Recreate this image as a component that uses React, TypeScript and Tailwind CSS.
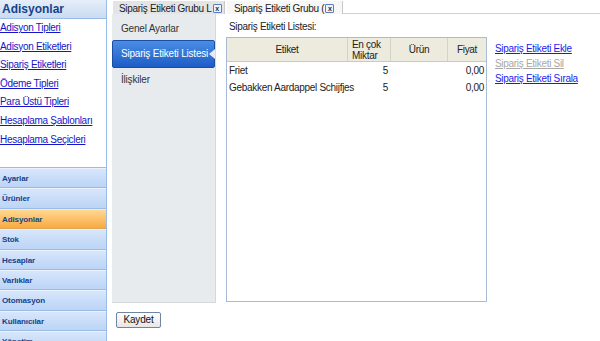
import React from 'react';

const FONT = { fontFamily: '"Liberation Sans", Arial, sans-serif' };

const SIDE_LINKS = [
  'Adisyon Tipleri',
  'Adisyon Etiketleri',
  'Sipariş Etiketleri',
  'Ödeme Tipleri',
  'Para Üstü Tipleri',
  'Hesaplama Şablonları',
  'Hesaplama Seçicleri',
];

const SECTIONS = [
  'Ayarlar',
  'Ürünler',
  'Adisyonlar',
  'Stok',
  'Hesaplar',
  'Varlıklar',
  'Otomasyon',
  'Kullanıcılar',
  'Yönetim',
];

const ROWS = [
  { name: 'Friet', max: '5', product: '', price: '0,00' },
  { name: 'Gebakken Aardappel Schijfjes', max: '5', product: '', price: '0,00' },
];

// small [x] close box used on the document tabs
function CloseBox() {
  return (
    <span className="ml-[1px] inline-flex h-[9px] w-[9px] items-center justify-center rounded-[1px] border border-[#5b7fb4] bg-[#eef3fa] text-[7px] font-bold leading-none text-[#1c2b44]">
      x
    </span>
  );
}

function Sidebar() {
  return (
    <div className="flex w-[107px] shrink-0 flex-col border-r border-[#99bbe8] bg-white">
      <div className="h-[19px] shrink-0 border-b border-[#99bbe8] bg-gradient-to-b from-[#e6eef9] to-[#c9dbf1] pl-[2px] text-[12px] font-bold leading-[18px] text-[#15428b]">
        Adisyonlar
      </div>
      <div className="h-[149px] shrink-0 border-b border-[#99bbe8]">
        {SIDE_LINKS.map((l) => (
          <div key={l} className="h-[18.6px] text-[10px] leading-[18.6px] tracking-[-0.3px]">
            <a href="#" className="text-[#1515c8] underline">
              {l}
            </a>
          </div>
        ))}
      </div>
      {SECTIONS.map((s) => {
        const active = s === 'Adisyonlar';
        return (
          <div
            key={s}
            className={
              active
                ? 'h-[20.4px] shrink-0 border-b border-[#e3a55a] border-t border-t-[#ffe8b8] bg-gradient-to-b from-[#ffd88f] to-[#f8a93d] pl-[2px] text-[8px] font-bold leading-[19px] tracking-[-0.1px] text-[#15428b]'
                : 'h-[20.4px] shrink-0 border-b border-[#99bbe8] border-t border-t-[#eaf2fd] bg-gradient-to-b from-[#d7e6fb] to-[#bcd4f6] pl-[2px] text-[8px] font-bold leading-[19px] tracking-[-0.1px] text-[#15428b]'
            }
          >
            {s}
          </div>
        );
      })}
    </div>
  );
}

function Tabs() {
  return (
    <div className="flex h-[14px] items-end">
      <div className="h-[14px] w-[1px]" />
      <div className="flex h-[13px] w-[112px] items-center border-r border-[#c8c8c8] bg-[#e4e4e4] pl-[6px] pt-[1px] text-[10px] tracking-[-0.3px] text-[#222]">
        <span className="whitespace-nowrap">Sipariş Etiketi Grubu L</span>
        <CloseBox />
      </div>
      <div className="ml-[2px] flex h-[13px] w-[116px] items-center border-r border-[#c8c8c8] bg-[#f7f7f7] pl-[7px] pt-[1px] text-[10px] tracking-[-0.3px] text-[#222]">
        <span className="whitespace-nowrap">Sipariş Etiketi Grubu (</span>
        <CloseBox />
      </div>
      <div className="h-[14px] flex-1 border-b border-[#d0d0d0]" />
    </div>
  );
}

function NavPanel() {
  return (
    <div className="flex h-[289px] w-[104px] shrink-0 flex-col border-r border-b border-[#d6d9dc] bg-[#e8ebee] text-[10px] tracking-[-0.2px] text-[#333]">
      <div className="h-[26px] pl-[9px] pt-[7px]">Genel Ayarlar</div>
      <div className="relative h-[28px] rounded-[2px] border border-[#1b4ea6] bg-gradient-to-b from-[#4a8de4] to-[#1d5cc6] pl-[8px] leading-[26px] text-white">
        Sipariş Etiketi Listesi
        <span className="absolute right-[-1px] top-[8px] h-0 w-0 border-y-[5px] border-r-[6px] border-y-transparent border-r-[#e8ebee]" />
      </div>
      <div className="pl-[9px] pt-[4px]">İlişkiler</div>
    </div>
  );
}

function TagGrid() {
  return (
    <div className="flex h-[265px] w-[261px] flex-col border border-[#a7bbd4] bg-white text-[10px] tracking-[-0.3px] text-[#222]">
      <div className="flex h-[24px] shrink-0 border-b border-[#cdcab9] bg-[#ecebdd]">
        <div className="flex w-[121px] items-center justify-center border-r border-[#d6d3c3]">Etiket</div>
        <div className="flex w-[43px] flex-col justify-center border-r border-[#d6d3c3] pl-[4px] leading-[11px]">
          <span>En çok</span>
          <span>Miktar</span>
        </div>
        <div className="flex w-[57px] items-center justify-center border-r border-[#d6d3c3]">Ürün</div>
        <div className="flex flex-1 items-center justify-center">Fiyat</div>
      </div>
      <div>
        {ROWS.map((r) => (
          <div key={r.name} className="flex h-[17px] items-center">
            <div className="w-[121px] whitespace-nowrap pl-[2px]">{r.name}</div>
            <div className="w-[43px] pr-[3px] text-right">{r.max}</div>
            <div className="w-[57px]">{r.product}</div>
            <div className="flex-1 pr-[2px] text-right">{r.price}</div>
          </div>
        ))}
      </div>
    </div>
  );
}

export default function App() {
  return (
    <div className="flex h-[341px] w-[600px] overflow-hidden bg-white" style={FONT}>
      <Sidebar />
      <div className="flex flex-1 flex-col pl-[5px]">
        <Tabs />
        <div className="flex">
          <NavPanel />
          <div className="flex pl-[10px]">
            <div className="flex flex-col">
              <div className="h-[23px] pl-[3px] pt-[5px] text-[10px] tracking-[-0.3px] text-[#222]">
                Sipariş Etiketi Listesi:
              </div>
              <TagGrid />
            </div>
            <div className="flex flex-col pl-[8px] pt-[27px] text-[10px] leading-[15px] tracking-[-0.3px]">
              <a href="#" className="text-[#1a1af0] underline">Sipariş Etiketi Ekle</a>
              <a href="#" className="text-[#a8a8a8] underline">Sipariş Etiketi Sil</a>
              <a href="#" className="text-[#1a1af0] underline">Sipariş Etiketi Sırala</a>
            </div>
          </div>
        </div>
        <div className="flex pl-[4px] pt-[9px]">
          <button className="h-[16px] w-[45px] rounded-[2px] border border-[#6f85a3] bg-gradient-to-b from-white to-[#e6e6e6] text-[10px] leading-none tracking-[-0.2px] text-[#111]">
            Kaydet
          </button>
        </div>
      </div>
    </div>
  );
}
